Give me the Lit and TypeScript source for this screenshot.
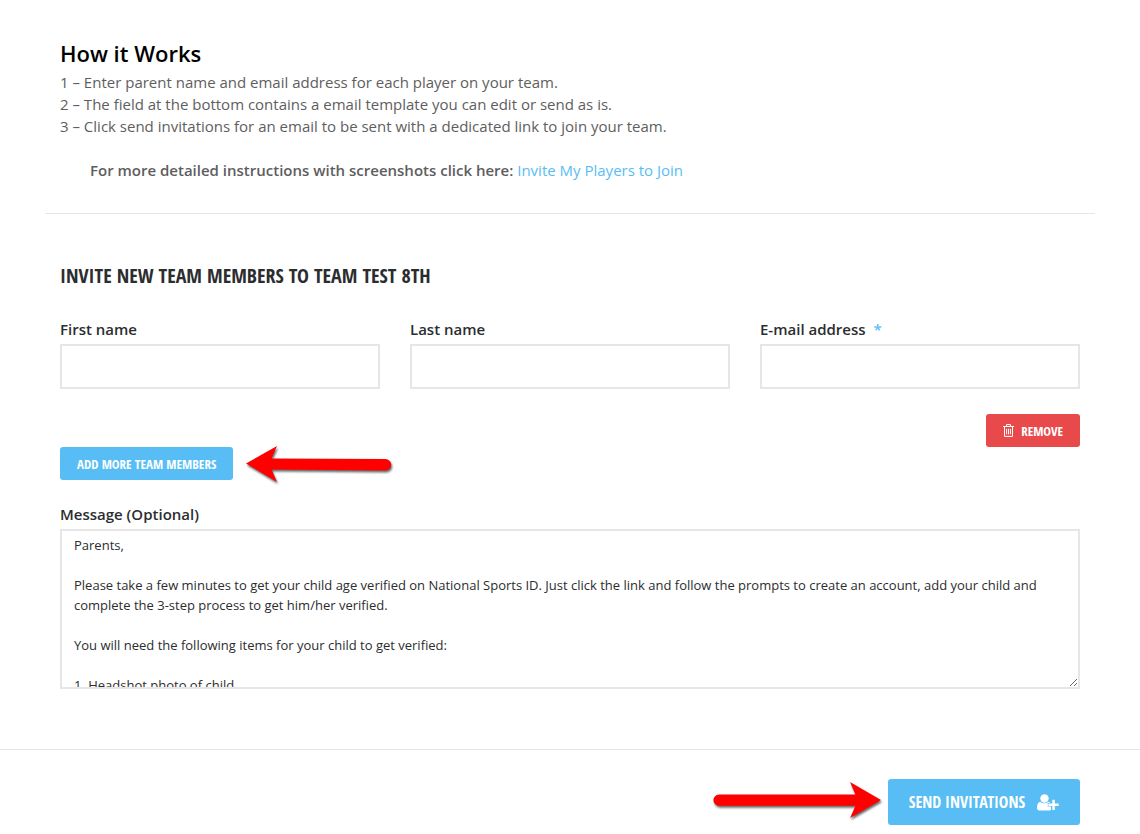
import { LitElement, html, css, svg } from "lit";
import { customElement, property } from "lit/decorators.js";

const MESSAGE = `Parents,

Please take a few minutes to get your child age verified on National Sports ID. Just click the link and follow the prompts to create an account, add your child and complete the 3-step process to get him/her verified.

You will need the following items for your child to get verified:

1. Headshot photo of child`;

@customElement("pointer-arrow")
class PointerArrow extends LitElement {
  @property() direction = "left";

  static styles = css`
    :host {
      display: block;
      height: 33px;
    }
    .arrow {
      display: block;
      overflow: visible;
      filter: drop-shadow(1px 2px 1px rgba(0, 0, 0, 0.6));
    }
  `;

  render() {
    const left = svg`<path fill="#fe0000" d="M0 16.500 31-1 25.500 11.500 139.500 12a5.700 5.700 0 0 1 0 11.400L25.500 22.500 31 35Z"/>`;
    const right = svg`<path fill="#fe0000" d="M168 14 137-4 142.500 8.500H6a5.600 5.600 0 0 0 0 11.200H142.500L137 32Z"/>`;
    return this.direction === "left"
      ? html`<svg class="arrow" width="145" height="33" viewBox="0 0 145 33" aria-hidden="true">${left}</svg>`
      : html`<svg class="arrow" width="168" height="33" viewBox="0 0 168 33" aria-hidden="true">${right}</svg>`;
  }
}

@customElement("app-root")
class AppRoot extends LitElement {
  static styles = css`
    :host {
      display: block;
      background: #fff;
      color: #2b2d2f;
      font-family: "Open Sans", "Noto Sans", sans-serif;
      font-size: 15px;
      line-height: 22px;
    }
    * {
      box-sizing: border-box;
    }
    .intro {
      margin: 0 45px;
      padding: 37px 15px 32px;
      border-bottom: 1px solid #e6e6e6;
      color: #5e5e5e;
    }
    .title {
      margin: 0 0 2px;
      color: #000;
      font-size: 22px;
      font-weight: 600;
      line-height: 32px;
    }
    .steps {
      margin: 0;
      padding: 0;
      list-style: none;
    }
    .more {
      margin: 22px 0 0;
      padding-left: 30px;
      font-weight: 600;
    }
    .link {
      color: #58bdf4;
      font-weight: 400;
      text-decoration: none;
    }
    .form {
      padding: 46px 60px 60px;
    }
    .heading {
      margin: 0 0 24px;
      font-family: "Open Sans Condensed", "Roboto Condensed", sans-serif;
      font-size: 20px;
      font-weight: 700;
      line-height: 32px;
      text-transform: uppercase;
    }
    .fields {
      display: grid;
      grid-template-columns: repeat(3, 1fr);
      gap: 30px;
    }
    .label {
      display: block;
      margin-bottom: 2px;
      font-weight: 600;
      line-height: 26px;
    }
    .required {
      margin-left: 4px;
      color: #58bdf4;
    }
    .input,
    .message {
      display: block;
      width: 100%;
      border: 2px solid #e6e6e6;
      border-radius: 0;
      background: #fff;
      color: inherit;
      font-family: inherit;
      outline: none;
    }
    .input {
      height: 45px;
      padding: 0 12px;
      font-size: 15px;
    }
    .message {
      height: 160px;
      padding: 4px 12px;
      overflow: hidden;
      font-size: 13px;
      line-height: 20px;
      resize: vertical;
    }
    .button {
      display: flex;
      align-items: center;
      justify-content: center;
      height: 33px;
      padding: 0 17px;
      border: 0;
      border-radius: 3px;
      background: #58bdf4;
      color: #fff;
      font-family: "Open Sans Condensed", "Roboto Condensed", sans-serif;
      font-size: 13px;
      font-weight: 700;
      text-transform: uppercase;
      white-space: nowrap;
    }
    .danger {
      gap: 7px;
      background: #e84a4c;
    }
    .large {
      gap: 12px;
      height: 46px;
      padding: 0 21px;
      font-size: 16px;
    }
    .remove-row {
      display: flex;
      justify-content: flex-end;
      margin-top: 25px;
    }
    .add-row {
      display: flex;
      gap: 13px;
      margin-bottom: 21px;
    }
    .footer {
      display: flex;
      align-items: center;
      justify-content: flex-end;
      gap: 7px;
      padding: 29px 60px 9px;
      border-top: 1px solid #e6e6e6;
    }
  `;

  render() {
    return html`
      <section class="intro">
        <h2 class="title">How it Works</h2>
        <ul class="steps">
          <li>1 – Enter parent name and email address for each player on your team.</li>
          <li>2 – The field at the bottom contains a email template you can edit or send as is.</li>
          <li>3 – Click send invitations for an email to be sent with a dedicated link to join your team.</li>
        </ul>
        <p class="more">
          For more detailed instructions with screenshots click here:
          <a class="link" href="#">Invite My Players to Join</a>
        </p>
      </section>
      <form @submit=${(e: Event) => e.preventDefault()}>
        <div class="form">
          <h3 class="heading">Invite new team members to team test 8th</h3>
          <div class="fields">
            <div>
              <label class="label" for="first">First name</label>
              <input class="input" id="first" type="text" />
            </div>
            <div>
              <label class="label" for="last">Last name</label>
              <input class="input" id="last" type="text" />
            </div>
            <div>
              <label class="label" for="email">E-mail address <span class="required">*</span></label>
              <input class="input" id="email" type="email" required />
            </div>
          </div>
          <div class="remove-row">
            <button class="button danger" type="button">
              <svg width="11" height="13" viewBox="0 0 11 13" fill="none" stroke="currentColor" aria-hidden="true">
                <path d="M0 2.500h11M3.500 2.300V.600h4v1.700M1.500 2.700v9.700h8V2.700M3.600 4.800v5.500M5.500 4.800v5.500M7.400 4.800v5.500" />
              </svg>
              Remove
            </button>
          </div>
          <div class="add-row">
            <button class="button" type="button">Add more team members</button>
            <pointer-arrow direction="left"></pointer-arrow>
          </div>
          <label class="label" for="message">Message (Optional)</label>
          <textarea class="message" id="message" .value=${MESSAGE}></textarea>
        </div>
        <div class="footer">
          <pointer-arrow direction="right"></pointer-arrow>
          <button class="button large" type="submit">
            Send invitations
            <svg width="22" height="17" viewBox="0 0 22 17" fill="currentColor" aria-hidden="true">
              <circle cx="7.500" cy="4.500" r="4.200" />
              <path d="M3.200 7.700C.800 8.500 0 10.800 0 13.800c0 1.500.900 2.700 2.500 2.700h10.200c.8 0 1.300-.2 1.300-.7V12.500h-3.200V9.100h2.300c-.4-.7-.9-1.200-1.500-1.400-2.300 2.200-6.100 2.200-8.400 0Z" />
              <path d="M15.300 5.800h2.500v3.800h3.900v2.500h-3.900v4h-2.500v-4h-3.900V9.600h3.900Z" />
            </svg>
          </button>
        </div>
      </form>
    `;
  }
}
